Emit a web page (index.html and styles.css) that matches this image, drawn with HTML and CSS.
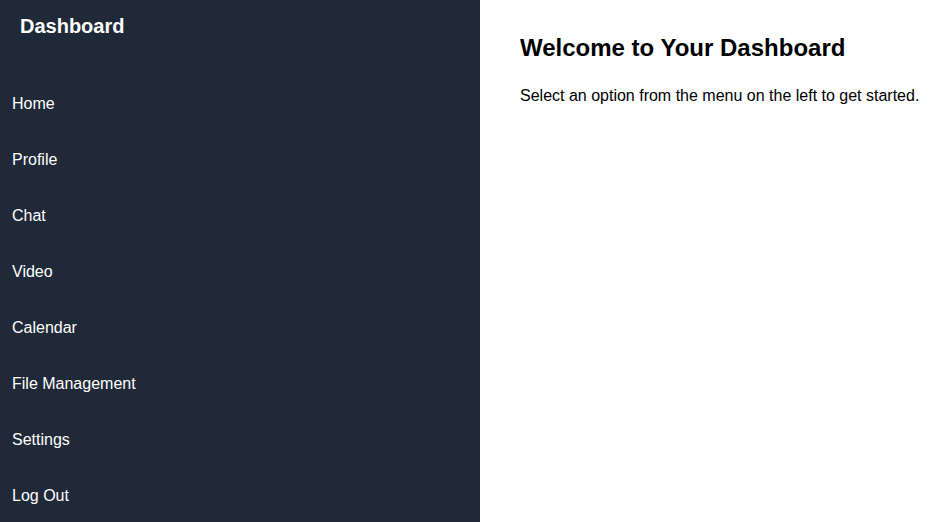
FILE: index.html
```html
<!DOCTYPE html>
<html lang="en">
<head>
<meta charset="utf-8">
<title>Dashboard</title>
<link rel="stylesheet" href="styles.css">
</head>
<body>
<div class="layout">
  <aside class="sidebar">
    <h2 class="brand">Dashboard</h2>
    <nav class="nav">
      <a class="nav-item" href="#">Home</a>
      <a class="nav-item" href="#">Profile</a>
      <a class="nav-item" href="#">Chat</a>
      <a class="nav-item" href="#">Video</a>
      <a class="nav-item" href="#">Calendar</a>
      <a class="nav-item" href="#">File Management</a>
      <a class="nav-item" href="#">Settings</a>
      <a class="nav-item" href="#">Log Out</a>
    </nav>
  </aside>
  <main class="main">
    <h1 class="title">Welcome to Your Dashboard</h1>
    <p class="lead">Select an option from the menu on the left to get started.</p>
  </main>
</div>
</body>
</html>
```

FILE: styles.css
```css
html, body {
  margin: 0;
  padding: 0;
  height: 100%;
  overflow: hidden;
}
body {
  font-family: "Liberation Sans", Arial, sans-serif;
  background: #ffffff;
  color: #000000;
}
.layout {
  display: flex;
  height: 100vh;
}
.sidebar {
  width: 480px;
  flex-shrink: 0;
  background: #1f2937;
  color: #ffffff;
  display: flex;
  flex-direction: column;
}
.brand {
  margin: 0;
  padding: 15px 20px 0;
  font-size: 20px;
  line-height: 23px;
  font-weight: bold;
}
.nav {
  display: flex;
  flex-direction: column;
  margin-top: 38px;
}
.nav-item {
  display: block;
  padding: 18px 12px;
  font-size: 16px;
  line-height: 20px;
  color: #ffffff;
  text-decoration: none;
}
.main {
  flex: 1;
  min-width: 0;
  padding: 34px 0 34px 40px;
}
.title {
  margin: 0;
  font-size: 24px;
  line-height: 28px;
  font-weight: bold;
}
.lead {
  margin: 25px 0 0;
  font-size: 16px;
  line-height: 18px;
  white-space: nowrap;
}
```
